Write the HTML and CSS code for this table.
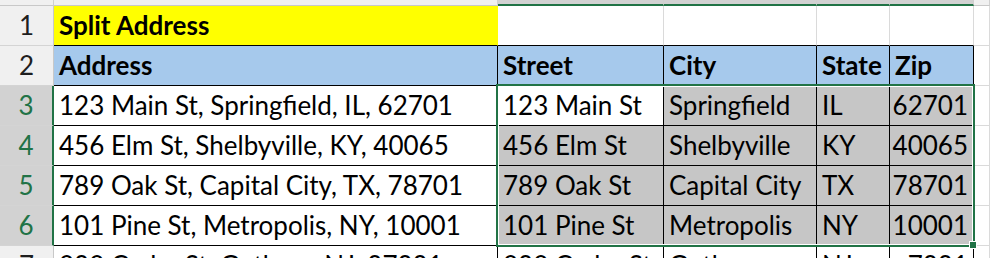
FILE: index.html
```html
<!DOCTYPE html>
<html lang="en">
<head>
    <meta charset="UTF-8">
    <title>Split Address</title>
    <link rel="stylesheet" href="styles.css">
</head>
<body>
    <div class="sheet">
        <!-- column header strip -->
        <div class="corner"></div>
        <div class="colhead"></div>
        <div class="colhead sel"></div>
        <div class="colhead sel"></div>
        <div class="colhead sel"></div>
        <div class="colhead sel"></div>
        <div class="colhead"></div>

        <!-- row 1 -->
        <div class="rowhead">1</div>
        <div class="cell title">Split Address</div>
        <div class="cell under"></div>
        <div class="cell under"></div>
        <div class="cell under"></div>
        <div class="cell under"></div>
        <div class="cell"></div>

        <!-- row 2 -->
        <div class="rowhead">2</div>
        <div class="cell tb hdr">Address</div>
        <div class="cell tb hdr">Street</div>
        <div class="cell tb hdr">City</div>
        <div class="cell tb hdr">State</div>
        <div class="cell tb hdr">Zip</div>
        <div class="cell"></div>

        <!-- row 3 -->
        <div class="rowhead sel">3</div>
        <div class="cell tb">123 Main St, Springfield, IL, 62701</div>
        <div class="cell tb">123 Main St</div>
        <div class="cell tb sel">Springfield</div>
        <div class="cell tb sel">IL</div>
        <div class="cell tb sel num">62701</div>
        <div class="cell"></div>

        <!-- row 4 -->
        <div class="rowhead sel">4</div>
        <div class="cell tb">456 Elm St, Shelbyville, KY, 40065</div>
        <div class="cell tb sel">456 Elm St</div>
        <div class="cell tb sel">Shelbyville</div>
        <div class="cell tb sel">KY</div>
        <div class="cell tb sel num">40065</div>
        <div class="cell"></div>

        <!-- row 5 -->
        <div class="rowhead sel">5</div>
        <div class="cell tb">789 Oak St, Capital City, TX, 78701</div>
        <div class="cell tb sel">789 Oak St</div>
        <div class="cell tb sel">Capital City</div>
        <div class="cell tb sel">TX</div>
        <div class="cell tb sel num">78701</div>
        <div class="cell"></div>

        <!-- row 6 -->
        <div class="rowhead sel">6</div>
        <div class="cell tb">101 Pine St, Metropolis, NY, 10001</div>
        <div class="cell tb sel">101 Pine St</div>
        <div class="cell tb sel">Metropolis</div>
        <div class="cell tb sel">NY</div>
        <div class="cell tb sel num">10001</div>
        <div class="cell"></div>

        <!-- row 7 -->
        <div class="rowhead">7</div>
        <div class="cell tb">202 Cedar St, Gotham, NJ, 07001</div>
        <div class="cell tb">202 Cedar St</div>
        <div class="cell tb">Gotham</div>
        <div class="cell tb">NJ</div>
        <div class="cell tb num">7001</div>
        <div class="cell"></div>

        <!-- selection B3:E6 -->
        <div class="selection"></div>
        <div class="handle"></div>
    </div>
</body>
</html>
```

FILE: styles.css
```css
body {
    margin: 0;
    background: white;
    overflow: hidden;
    font-family: Lato, 'Liberation Sans', sans-serif;
    font-size: 26px;
    color: #000;
}
.sheet {
    position: relative;
    display: grid;
    grid-template-columns: 54px 444px 166px 153px 73px 84px 16px;
    grid-template-rows: 6px repeat(7, 40px);
    width: 990px;
    height: 258px;
    overflow: hidden;
}
.sheet > div {
    box-sizing: border-box;
}
.corner,
.colhead {
    background: #f0f0f0;
    border-right: 1px solid #d0d0d0;
    border-bottom: 1px solid #c8c8c8;
}
.colhead.sel {
    background: #d2d2d2;
    border-bottom: 2px solid #217346;
}
.rowhead {
    background: #f0f0f0;
    border-right: 1px solid #c8c8c8;
    border-bottom: 1px solid #d4d4d4;
    display: flex;
    align-items: flex-end;
    justify-content: center;
    padding-bottom: 7px;
    line-height: 26px;
    color: #1e1e1e;
}
.rowhead.sel {
    background: #d2d2d2;
    color: #217346;
    border-right: 2px solid #217346;
}
.cell {
    border-right: 1px solid #dadada;
    border-bottom: 1px solid #dadada;
    display: flex;
    align-items: flex-end;
    padding: 0 5px 7px 5px;
    line-height: 26px;
    white-space: nowrap;
    overflow: hidden;
}
.cell.tb {
    border-color: #000;
}
.cell.under {
    border-bottom-color: #000;
}
.cell.title {
    background: #ffff00;
    font-weight: bold;
    border-right-color: #ffff00;
    border-bottom-color: #000;
}
.cell.hdr {
    background: #a6c9ec;
    font-weight: bold;
}
.cell.sel {
    background: #c6c6c6;
}
.cell.num {
    justify-content: flex-end;
}
.selection {
    position: absolute;
    left: 496px;
    top: 84px;
    width: 479px;
    height: 163px;
    border: 2px solid #217346;
    box-shadow: inset 0 0 0 1px #fff;
    pointer-events: none;
}
.handle {
    position: absolute;
    left: 969px;
    top: 241px;
    width: 8px;
    height: 8px;
    background: #217346;
    border: 1px solid #fff;
}
```
